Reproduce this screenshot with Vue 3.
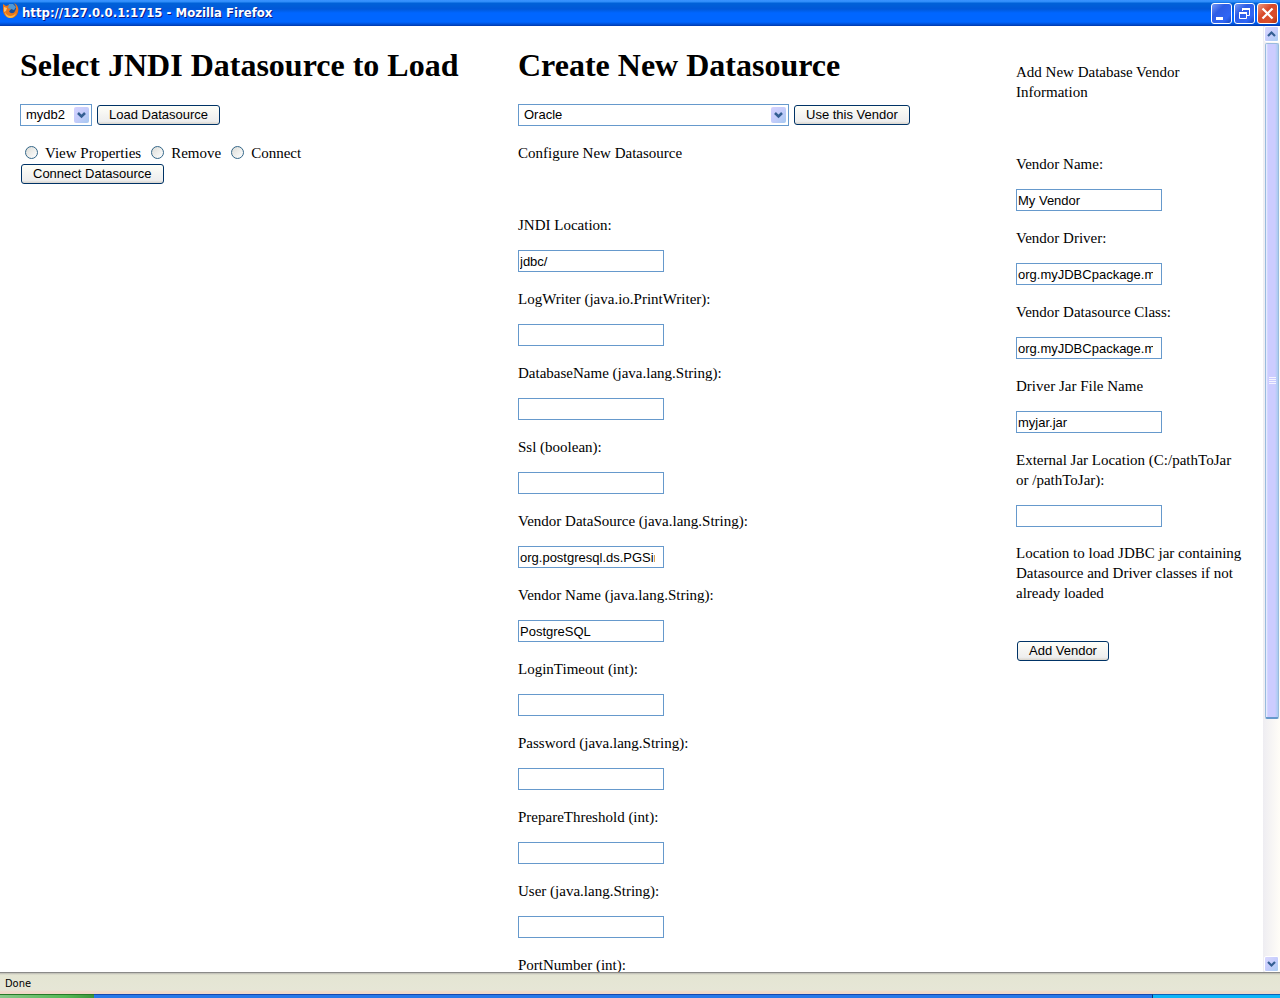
<script setup>
import { ref } from 'vue'

const action = ref('')
const source = ref('mydb2')
const vendor = ref('Oracle')

const properties = ref([
  { id: 'jndi', label: 'JNDI Location:', value: 'jdbc/' },
  { id: 'logwriter', label: 'LogWriter (java.io.PrintWriter):', value: '' },
  { id: 'dbname', label: 'DatabaseName (java.lang.String):', value: '' },
  { id: 'ssl', label: 'Ssl (boolean):', value: '' },
  { id: 'vds', label: 'Vendor DataSource (java.lang.String):', value: 'org.postgresql.ds.PGSimpleDataSource' },
  { id: 'vname', label: 'Vendor Name (java.lang.String):', value: 'PostgreSQL' },
  { id: 'timeout', label: 'LoginTimeout (int):', value: '' },
  { id: 'password', label: 'Password (java.lang.String):', value: '' },
  { id: 'threshold', label: 'PrepareThreshold (int):', value: '' },
  { id: 'user', label: 'User (java.lang.String):', value: '' },
  { id: 'port', label: 'PortNumber (int):', value: '' }
])

const vendorFields = ref([
  { id: 'newname', label: 'Vendor Name:', value: 'My Vendor' },
  { id: 'driver', label: 'Vendor Driver:', value: 'org.myJDBCpackage.myDriver' },
  { id: 'dsclass', label: 'Vendor Datasource Class:', value: 'org.myJDBCpackage.myDatasource' },
  { id: 'jar', label: 'Driver Jar File Name', value: 'myjar.jar' },
  { id: 'location', label: 'External Jar Location (C:/pathToJar or /pathToJar):', value: '' }
])
</script>

<template>
  <div class="window">
    <header class="titlebar">
      <svg class="fox" width="18" height="18" viewBox="0 0 18 18" aria-hidden="true">
        <circle cx="9" cy="8" r="7" fill="#1b4f98" />
        <path d="M7 1l4 0 3 3-2 3-3-1-2 2-2-3z" fill="#4f98d6" />
        <path d="M1 1l3 2 3-1-1 3 3 1-2 2c1 3 5 3 6 0 2-3 1-5-1-8 4 2 5 6 4 9-1 4-4 6-7 6-5 0-8-4-8-8z" fill="#e8761a" />
        <path d="M3 9c2 5 8 5 11 1-1 4-4 5-6 5-3 0-5-3-5-6z" fill="#f9b84a" />
        <path d="M2 4l3 1-1 3-2 1z" fill="#f8c070" />
      </svg>
      <span class="title">http://127.0.0.1:1715 - Mozilla Firefox</span>
      <button class="winbtn" type="button" aria-label="Minimize">
        <svg width="19" height="19" viewBox="0 0 19 19"><path d="M4 13h7v3H4z" fill="#fff" /></svg>
      </button>
      <button class="winbtn" type="button" aria-label="Restore">
        <svg width="19" height="19" viewBox="0 0 19 19" fill="none" stroke="#fff">
          <path d="M7.500 7V5.500h7V11.500H12" /><path d="M7 5h8" stroke-width="2" />
          <path d="M4.500 8.500h7v6h-7z" /><path d="M4 9h8" stroke-width="2" />
        </svg>
      </button>
      <button class="winbtn close" type="button" aria-label="Close">
        <svg width="19" height="19" viewBox="0 0 19 19"><path d="M4.500 4.500l10 10M14.500 4.500l-10 10" stroke="#fff" stroke-width="2.200" /></svg>
      </button>
    </header>

    <div class="viewport">
      <main class="page">
        <section>
          <h1>Select JNDI Datasource to Load</h1>
          <div class="row">
            <span class="pick">
              <select v-model="source" aria-label="Datasource"><option>mydb2</option></select>
              <svg class="arrow" width="15" height="16" viewBox="0 0 15 16"><path d="M4 6l3.500 3.500L11 6" fill="none" stroke="#345f93" stroke-width="2.500" /></svg>
            </span>
            <button class="btn" type="button">Load Datasource</button>
          </div>
          <div class="radios">
            <label v-for="name in ['View Properties', 'Remove', 'Connect']" :key="name">
              <input v-model="action" type="radio" name="action" :value="name" />{{ name }}
            </label>
          </div>
          <button class="btn connect" type="button">Connect Datasource</button>
        </section>

        <section>
          <h1>Create New Datasource</h1>
          <div class="row">
            <span class="pick wide">
              <select v-model="vendor" aria-label="Vendor"><option>Oracle</option></select>
              <svg class="arrow" width="15" height="16" viewBox="0 0 15 16"><path d="M4 6l3.500 3.500L11 6" fill="none" stroke="#345f93" stroke-width="2.500" /></svg>
            </span>
            <button class="btn" type="button">Use this Vendor</button>
          </div>
          <p class="intro">Configure New Datasource</p>
          <div v-for="f in properties" :key="f.id" class="field">
            <label :for="f.id">{{ f.label }}</label>
            <input :id="f.id" v-model="f.value" type="text" />
          </div>
        </section>

        <section>
          <p class="add">Add New Database Vendor Information</p>
          <div v-for="f in vendorFields" :key="f.id" class="field">
            <label :for="f.id">{{ f.label }}</label>
            <input :id="f.id" v-model="f.value" type="text" />
          </div>
          <p class="note">Location to load JDBC jar containing Datasource and Driver classes if not already loaded</p>
          <button class="btn" type="button">Add Vendor</button>
        </section>
      </main>

      <div class="scrollbar">
        <button class="step" type="button" aria-label="Scroll up">
          <svg width="13" height="14" viewBox="0 0 13 14"><path d="M3 9l3.500-3.500L10 9" fill="none" stroke="#345f93" stroke-width="2.200" /></svg>
        </button>
        <div class="track"><div class="thumb"><i></i><i></i><i></i><i></i></div></div>
        <button class="step" type="button" aria-label="Scroll down">
          <svg width="13" height="14" viewBox="0 0 13 14"><path d="M3 5l3.500 3.500L10 5" fill="none" stroke="#345f93" stroke-width="2.200" /></svg>
        </button>
      </div>
    </div>

    <footer class="status">Done</footer>
    <div class="taskbar"><div class="start"></div><div class="tasks"></div><div class="tray"></div></div>
  </div>
</template>

<style>
body { margin: 0; background: #fff; }
</style>

<style scoped>
* { box-sizing: border-box; }
.window {
  display: flex;
  flex-direction: column;
  height: 100vh;
  overflow: hidden;
  color: #000;
  font: 15px/20px "Liberation Serif", serif;
}
.titlebar {
  display: flex;
  flex: none;
  align-items: center;
  gap: 2px;
  height: 26px;
  padding: 0 2px;
  background: linear-gradient(#3a93ff 0, #2d8cf8 2px, #0062d8 3px, #0058d8 9px, #0066ff 13px, #0066ff 22px, #0047c5 25px, #0036a8 26px);
}
.fox { flex: none; margin-bottom: 2px; }
.title {
  flex: 1;
  color: #fff;
  font: bold 13px/20px "DejaVu Sans Condensed", "DejaVu Sans", sans-serif;
  text-shadow: 1px 1px #0a1883;
  white-space: nowrap;
}
.winbtn {
  width: 21px;
  height: 21px;
  padding: 0;
  border: 1px solid #fff;
  border-radius: 3px;
  background: linear-gradient(135deg, #7799f5, #2d5de5 35%, #2f66f5 75%, #1746c0);
}
.winbtn svg { display: block; }
.close { background: linear-gradient(135deg, #ee9a80, #d8492a 40%, #d94f2b 75%, #a8300f); }
.viewport { display: flex; flex: 1; min-height: 0; background: #fff; }
.page {
  display: grid;
  flex: 1;
  grid-template-columns: 498fr 498fr 229fr;
  align-content: start;
  height: 100%;
  padding: 20px 18px 0 20px;
  overflow: hidden;
}
h1 { margin: 0 0 20px; font: bold 32px/38px "Liberation Serif", serif; white-space: nowrap; }
p { margin: 0; }
.row { display: flex; align-items: center; gap: 5px; height: 22px; }
.pick { position: relative; width: 72px; height: 22px; }
.wide { width: 271px; }
select {
  width: 100%;
  height: 22px;
  padding: 0 18px 0 5px;
  border: 1px solid #6699cc;
  border-radius: 0;
  background: #fff;
  color: #000;
  font: 13px/18px "Liberation Sans", sans-serif;
  appearance: none;
}
.arrow {
  position: absolute;
  top: 3px;
  right: 3px;
  border-radius: 2px;
  background: linear-gradient(135deg, #d5d2ff, #c4ccfb 50%, #a5c8f0);
  pointer-events: none;
}
.btn {
  height: 20px;
  padding: 0 11px;
  border: 1px solid #003366;
  border-radius: 3px;
  background: linear-gradient(#fffff8, #f3f3f1 55%, #eeeeee 85%, #d8d4cc);
  color: #000;
  font: 13px/18px "Liberation Sans", sans-serif;
  white-space: nowrap;
}
.radios { display: flex; gap: 10px; height: 20px; margin-top: 17px; padding-left: 5px; white-space: nowrap; }
.radios label { display: flex; align-items: center; gap: 7px; }
.radios input {
  width: 13px;
  height: 13px;
  margin: 0 0 2px;
  border: 1px solid #336688;
  border-radius: 50%;
  background: linear-gradient(135deg, #dcdcd7, #fff);
  appearance: none;
}
.radios input:checked { background: radial-gradient(#2ca02c 35%, #fff 40%); }
.connect { display: block; margin: 1px 0 0 1px; }
.intro { margin: 17px 0 52px; }
.field { margin-bottom: 16px; }
.field label { display: block; margin-bottom: 15px; }
.field input {
  display: block;
  width: 146px;
  height: 22px;
  padding: 0 8px 0 1px;
  border: 1px solid #6699cc;
  background: #fff;
  color: #000;
  font: 13px/18px "Liberation Sans", sans-serif;
}
.field + .field { margin-top: 17px; }
.add { margin: 16px 0 52px; }
.note { margin-bottom: 37px; }
.note + .btn { margin-left: 1px; }
.scrollbar { display: flex; flex: none; flex-direction: column; width: 17px; background: linear-gradient(90deg, #eeedf2, #fffdf7); }
.step {
  flex: none;
  width: 15px;
  height: 16px;
  margin: 0 1px;
  padding: 0;
  border: 1px solid #fff;
  border-radius: 2px;
  background: linear-gradient(135deg, #dad8ff, #c6cdfc 50%, #a9cdf2);
}
.step svg { display: block; }
.track { flex: 1; }
.thumb {
  display: flex;
  flex-direction: column;
  align-items: center;
  justify-content: center;
  gap: 1px;
  height: 74%;
  margin: 1px 1px 0 2px;
  border: 1px solid #99bbdd;
  border-bottom: 2px solid #6699cc;
  border-radius: 2px;
  background: linear-gradient(90deg, #eef4ff 0, #ccccff 2px, #ccccff 9px, #a8ccf0 12px);
}
.thumb i { width: 7px; height: 1px; background: #f4f4ff; }
.status {
  flex: none;
  height: 22px;
  padding-left: 5px;
  border-top: 1px solid #8a8a88;
  background: linear-gradient(#bbb9b2 0, #e4e5d3 2px, #e6e6d6 17px, #f0d8c8 19px);
  font: 11px/21px "DejaVu Sans Condensed", "DejaVu Sans", sans-serif;
}
.taskbar { display: flex; flex: none; height: 4px; background: #2878e8; }
.start { width: 94px; border-top: 1px solid #287828; background: linear-gradient(90deg, #88c888, #55b855 70%, #3c943c); }
.tasks { flex: 1; border-top: 1px solid #1848b0; }
.tray { width: 128px; border-top: 1px solid #1060b8; border-left: 1px solid #083878; background: #12b4f6; }
</style>
